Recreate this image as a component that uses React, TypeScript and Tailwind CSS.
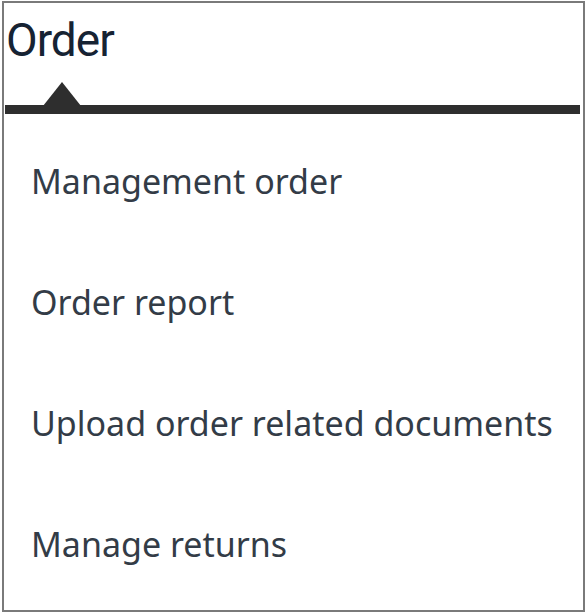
export default function App() {
  const items = [
    "Management order",
    "Order report",
    "Upload order related documents",
    "Manage returns",
  ];

  return (
    <div className="w-[586px] h-[613px] bg-white pl-[2px] pt-[1px]">
      <div className="w-[583px] h-[611px] border-2 border-[#7a7a7a] flex flex-col">
        <div className="h-[79px] pl-[2px] pt-[7px]">
          <span
            className="text-[46px] leading-[60px] tracking-[-1px] text-[#162333]"
            style={{ fontFamily: "Roboto, sans-serif" }}
          >
            Order
          </span>
        </div>
        <div className="relative ml-[1px] mr-[3px] h-[32px] flex flex-col justify-end">
          <svg
            className="absolute left-[38px] top-0"
            width="38"
            height="24"
            viewBox="0 0 38 24"
          >
            <polygon points="0,24 19,0 38,24" fill="#2e2e2e" />
          </svg>
          <div className="h-[9px] bg-[#2e2e2e]" />
        </div>
        <div className="mt-[7px] pl-[27px] flex flex-col">
          {items.map((item) => (
            <div
              key={item}
              className="h-[121px] leading-[121px] text-[34px] text-[#333c47] whitespace-nowrap"
              style={{ fontFamily: "'Noto Sans', sans-serif" }}
            >
              {item}
            </div>
          ))}
        </div>
      </div>
    </div>
  );
}
